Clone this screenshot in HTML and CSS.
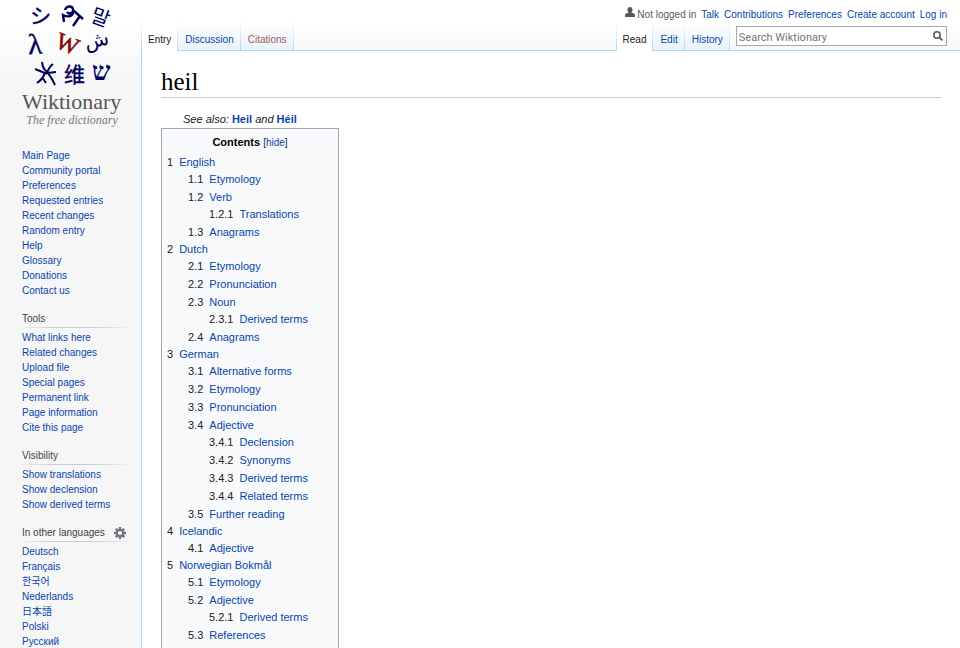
FILE: index.html
```html
<!DOCTYPE html>
<html lang="en">
<head>
<meta charset="utf-8">
<meta name="viewport" content="width=device-width, initial-scale=1">
<title>heil - Wiktionary</title>
<link rel="stylesheet" href="styles.css">
</head>
<body>
<div class="page">
  <aside class="sidebar">
    <a class="logo" href="#" aria-label="Wiktionary main page">
      <svg class="logo-tiles" viewBox="0 0 100 90" aria-hidden="true">
        <g class="tile-text">
          <text class="tile-medium" x="8" y="24" font-size="21" transform="rotate(4 19 16)">シ</text>
          <text x="70" y="25" font-size="20" transform="rotate(20 80 16)">말</text>
          <text class="tile-serif tile-medium" x="6" y="54" font-size="29" transform="rotate(-3 13 45)">λ</text>
          <text class="tile-serif tile-red" x="34" y="52" font-size="24" transform="rotate(22 46 44)">W</text>
          <text class="tile-arabic" x="63" y="47" font-size="20" transform="rotate(-12 74 43)">ش</text>
          <text class="tile-medium" x="42" y="82" font-size="21">维</text>
          <text class="tile-serif tile-bold" x="70" y="80" font-size="26">ש</text>
        </g>
        <g class="tile-stroke">
          <path d="M43 10C44 6 50 5 51 9C52 13 47 15 45 12M51 10C52 16 47 18 41 15L42 22M52 11L61 19M58 16L51 26"/>
          <path stroke-width="2" d="M20 62Q21 69 24 71Q29 76 33 85M13 69L23 73Q20 80 15 83M31 64Q27 67 25 73L34 72M20 77L24 83"/>
        </g>
      </svg>
      <span class="logo-name">Wiktionary</span>
      <span class="logo-tagline">The free dictionary</span>
    </a>
    <nav class="portal" aria-label="Navigation">
      <ul>
        <li><a href="#">Main Page</a></li>
        <li><a href="#">Community portal</a></li>
        <li><a href="#">Preferences</a></li>
        <li><a href="#">Requested entries</a></li>
        <li><a href="#">Recent changes</a></li>
        <li><a href="#">Random entry</a></li>
        <li><a href="#">Help</a></li>
        <li><a href="#">Glossary</a></li>
        <li><a href="#">Donations</a></li>
        <li><a href="#">Contact us</a></li>
      </ul>
    </nav>
    <nav class="portal" aria-labelledby="tools">
      <h3 id="tools">Tools</h3>
      <ul>
        <li><a href="#">What links here</a></li>
        <li><a href="#">Related changes</a></li>
        <li><a href="#">Upload file</a></li>
        <li><a href="#">Special pages</a></li>
        <li><a href="#">Permanent link</a></li>
        <li><a href="#">Page information</a></li>
        <li><a href="#">Cite this page</a></li>
      </ul>
    </nav>
    <nav class="portal" aria-labelledby="visibility">
      <h3 id="visibility">Visibility</h3>
      <ul>
        <li><a href="#">Show translations</a></li>
        <li><a href="#">Show declension</a></li>
        <li><a href="#">Show derived terms</a></li>
      </ul>
    </nav>
    <nav class="portal" aria-labelledby="languages">
      <div class="portal-head">
        <h3 id="languages">In other languages</h3>
        <button class="gear" type="button" aria-label="Language settings">
          <svg viewBox="0 0 12 12" aria-hidden="true">
            <circle cx="6" cy="6" r="3.2" fill="none" stroke="#72777d" stroke-width="2.200"/>
            <path d="M6 0V2.500M6 9.500V12M0 6H2.500M9.500 6H12M1.800 1.800L3.500 3.500M8.500 8.500L10.200 10.200M1.800 10.200L3.500 8.500M8.500 3.500L10.200 1.800" stroke="#72777d" stroke-width="2.400"/>
          </svg>
        </button>
      </div>
      <ul>
        <li><a href="#">Deutsch</a></li>
        <li><a href="#">Français</a></li>
        <li><a href="#" lang="ko">한국어</a></li>
        <li><a href="#">Nederlands</a></li>
        <li><a href="#" lang="ja">日本語</a></li>
        <li><a href="#">Polski</a></li>
        <li><a href="#">Русский</a></li>
      </ul>
    </nav>
  </aside>

  <div class="main">
    <header class="head">
      <nav class="personal" aria-label="Personal tools">
        <span class="anon">
          <svg viewBox="0 0 10 10" aria-hidden="true"><path d="M5 0C6.600 0 7.500 1.200 7.500 2.800C7.500 4 7 5.200 6.200 5.800C8.500 6 10 6.600 10 8.500V10H0V8.500C0 6.600 1.500 6 3.800 5.800C3 5.200 2.500 4 2.500 2.800C2.500 1.200 3.400 0 5 0Z" fill="#54595d"/></svg>
          Not logged in
        </span>
        <a href="#">Talk</a>
        <a href="#">Contributions</a>
        <a href="#">Preferences</a>
        <a href="#">Create account</a>
        <a href="#">Log in</a>
      </nav>
      <div class="bar">
        <nav class="tabs" aria-label="Namespaces">
          <a class="tab current" href="#">Entry</a>
          <a class="tab" href="#">Discussion</a>
          <a class="tab missing" href="#">Citations</a>
        </nav>
        <div class="bar-space"></div>
        <nav class="tabs" aria-label="Views">
          <a class="tab current" href="#">Read</a>
          <a class="tab" href="#">Edit</a>
          <a class="tab" href="#">History</a>
        </nav>
        <div class="search-cell">
          <form class="search" role="search">
            <input type="search" placeholder="Search Wiktionary" aria-label="Search Wiktionary">
            <button type="button" aria-label="Go">
              <svg viewBox="0 0 10 10" aria-hidden="true"><circle cx="4" cy="4" r="3.200" fill="none" stroke="#54595d" stroke-width="1.500"/><path d="M6.300 6.300L9.400 9.400" stroke="#54595d" stroke-width="1.800"/></svg>
            </button>
          </form>
        </div>
      </div>
    </header>

    <main class="content">
      <h1>heil</h1>
      <p class="see-also">See also: <a href="#">Heil</a> and <a href="#">Héil</a></p>
      <nav class="toc" aria-labelledby="contents">
        <div class="toc-title"><h2 id="contents">Contents</h2> <span>[<button type="button">hide</button>]</span></div>
        <ul>
          <li><a href="#"><span>1</span>English</a>
            <ul>
              <li><a href="#"><span>1.1</span>Etymology</a></li>
              <li><a href="#"><span>1.2</span>Verb</a>
                <ul>
                  <li><a href="#"><span>1.2.1</span>Translations</a></li>
                </ul>
              </li>
              <li><a href="#"><span>1.3</span>Anagrams</a></li>
            </ul>
          </li>
          <li><a href="#"><span>2</span>Dutch</a>
            <ul>
              <li><a href="#"><span>2.1</span>Etymology</a></li>
              <li><a href="#"><span>2.2</span>Pronunciation</a></li>
              <li><a href="#"><span>2.3</span>Noun</a>
                <ul>
                  <li><a href="#"><span>2.3.1</span>Derived terms</a></li>
                </ul>
              </li>
              <li><a href="#"><span>2.4</span>Anagrams</a></li>
            </ul>
          </li>
          <li><a href="#"><span>3</span>German</a>
            <ul>
              <li><a href="#"><span>3.1</span>Alternative forms</a></li>
              <li><a href="#"><span>3.2</span>Etymology</a></li>
              <li><a href="#"><span>3.3</span>Pronunciation</a></li>
              <li><a href="#"><span>3.4</span>Adjective</a>
                <ul>
                  <li><a href="#"><span>3.4.1</span>Declension</a></li>
                  <li><a href="#"><span>3.4.2</span>Synonyms</a></li>
                  <li><a href="#"><span>3.4.3</span>Derived terms</a></li>
                  <li><a href="#"><span>3.4.4</span>Related terms</a></li>
                </ul>
              </li>
              <li><a href="#"><span>3.5</span>Further reading</a></li>
            </ul>
          </li>
          <li><a href="#"><span>4</span>Icelandic</a>
            <ul>
              <li><a href="#"><span>4.1</span>Adjective</a></li>
            </ul>
          </li>
          <li><a href="#"><span>5</span>Norwegian Bokmål</a>
            <ul>
              <li><a href="#"><span>5.1</span>Etymology</a></li>
              <li><a href="#"><span>5.2</span>Adjective</a>
                <ul>
                  <li><a href="#"><span>5.2.1</span>Derived terms</a></li>
                </ul>
              </li>
              <li><a href="#"><span>5.3</span>References</a></li>
            </ul>
          </li>
        </ul>
      </nav>
    </main>
  </div>
</div>
</body>
</html>
```
FILE: styles.css
```css
* { box-sizing: border-box; }

html, body { height: 100%; }

body {
  margin: 0;
  overflow: hidden;
  background: #fff;
  color: #202122;
  font: 11px/17px "Liberation Sans", "Noto Sans CJK JP", "Noto Sans CJK KR", sans-serif;
}

a { color: #0645ad; text-decoration: none; }
ul { list-style: none; margin: 0; padding: 0; }
h1, h2, h3, p { margin: 0; }
button { border: 0; padding: 0; background: none; font: inherit; cursor: pointer; }
svg { display: block; }

.page {
  display: grid;
  grid-template-columns: 141px 1fr;
  min-height: 100%;
}

/* Sidebar */
.sidebar {
  padding: 0 15px 0 22px;
  background: linear-gradient(#fff 0, #fff 20px, #f6f6f6 80px);
  font-size: 10px;
  line-height: 15px;
}

.logo { display: flex; flex-direction: column; width: 100px; height: 136px; }
.logo-tiles { width: 100px; height: 90px; overflow: visible; }
.tile-text { fill: #00005c; font-family: "Noto Sans CJK JP", "Noto Sans CJK KR", "Noto Sans CJK SC", sans-serif; }
.tile-serif { font-family: "Liberation Serif", serif; }
.tile-arabic { font-family: "DejaVu Sans", sans-serif; }
.tile-bold { font-weight: 700; }
.tile-medium { stroke: #00005c; stroke-width: 0.4; }
.tile-red { fill: #8b0000; stroke: #8b0000; stroke-width: 0.5; }
.tile-stroke { fill: none; stroke: #00005c; stroke-width: 2.4; }
.logo-name {
  color: #555;
  font: 22px/24px "Liberation Serif", serif;
}
.logo-tagline {
  color: #777;
  font: italic 12px/12px "Liberation Serif", serif;
  text-align: center;
  white-space: nowrap;
}

.portal { margin-bottom: 13px; }
.logo + .portal { padding-top: 12px; }
.portal h3 { color: #404244; font-size: 10px; font-weight: 400; line-height: 15px; }
.portal h3 + ul, .portal-head + ul {
  margin-top: 1px;
  padding-top: 2px;
  border-top: 1px solid;
  border-image: linear-gradient(to right, #eee, #c8ccd1 33%, #c8ccd1 66%, #eee) 1;
}
.portal-head { display: flex; justify-content: space-between; align-items: center; }
.gear svg { width: 12px; height: 12px; }

/* Header */
.main { display: flex; flex-direction: column; min-width: 0; }
.head { background: linear-gradient(#fff 50%, #f6f6f6); }
.personal {
  display: flex;
  justify-content: flex-end;
  gap: 5px;
  padding: 7px 13px 0 0;
  font-size: 10px;
  line-height: 15px;
}
.anon { display: flex; gap: 2px; color: #54595d; }
.anon svg { width: 10px; height: 10px; }

.bar { display: flex; height: 29px; }
.bar-space { flex: 1; border-bottom: 1px solid #a7d7f9; }
.tabs { display: flex; font-size: 10px; }
.tab {
  display: block;
  padding: 9px 6px 0 7px;
  border-right: 1px solid;
  border-bottom: 1px solid;
  border-image: linear-gradient(#fff, #a7d7f9) 1;
  background: linear-gradient(#fff, #e8f2f8);
}
.tab.current {
  padding-left: 6px;
  border-left: 1px solid;
  border-bottom: 0;
  background: #fff;
  color: #202122;
}
.tab.missing { color: #a55858; }
.search-cell { padding: 4px 13px 0 6px; border-bottom: 1px solid #a7d7f9; }
.search {
  display: flex;
  align-items: center;
  width: 22vw;
  height: 20px;
  padding: 0 3px 0 2px;
  border: 1px solid #a2a9b1;
  background: #fff;
}
.search input {
  flex: 1;
  min-width: 0;
  padding: 2px 0 0;
  border: 0;
  outline: 0;
  background: none;
  font: 11px/17px Roboto, sans-serif;
}
.search input::placeholder { color: #72777d; }
.search button svg { width: 10px; height: 10px; }

/* Article */
.content { flex: 1; padding: 15px 19px 0; border-left: 1px solid #a7d7f9; }
h1 {
  border-bottom: 1px solid #c8ccd1;
  color: #000;
  font: 25px/31px "Liberation Serif", serif;
}
.see-also { padding: 13px 0 0 22px; font-style: italic; }
.see-also a { font-style: normal; font-weight: 700; }

.toc {
  width: 178px;
  padding: 5px;
  border: 1px solid #a2a9b1;
  background: #f8f9fa;
}
.toc-title { text-align: center; margin-bottom: 3px; }
.toc-title span { font-size: 10px; }
.toc h2 { display: inline; color: #000; font-size: 11px; }
.toc button { color: #0645ad; }
.toc ul ul { padding-left: 21px; }
.toc li li + li { margin-top: 1px; }
.toc a { display: flex; gap: 6px; }
.toc span { color: #202122; }
```
